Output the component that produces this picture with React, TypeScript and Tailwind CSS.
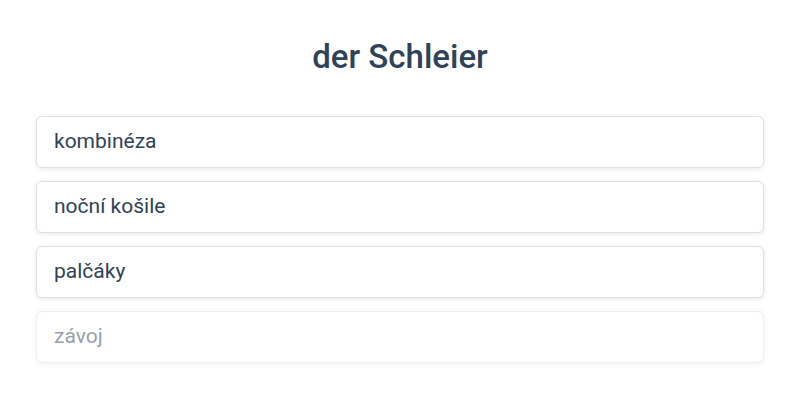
const words = ["kombinéza", "noční košile", "palčáky", "závoj"]

export default function App() {
  return (
    <div className="min-h-[400px] bg-white px-9 pt-[36px] font-['Roboto',sans-serif] text-[#2f4358]">
      <h1 className="text-center text-[33px] font-medium leading-[42px]">der Schleier</h1>
      <div className="mt-[38px] flex flex-col gap-[13px]">
        {words.map((w, i) => (
          <div
            key={w}
            className={
              i === 3
                ? "h-[52px] flex items-center px-[17px] rounded-md border border-[#e0e0e0] bg-white shadow-[0_1px_5px_rgba(0,0,0,0.1)] text-[21px] opacity-50"
                : "h-[52px] flex items-center px-[17px] rounded-md border border-[#e0e0e0] bg-white shadow-[0_1px_5px_rgba(0,0,0,0.1)] text-[21px]"
            }
          >
            {w}
          </div>
        ))}
      </div>
    </div>
  )
}
